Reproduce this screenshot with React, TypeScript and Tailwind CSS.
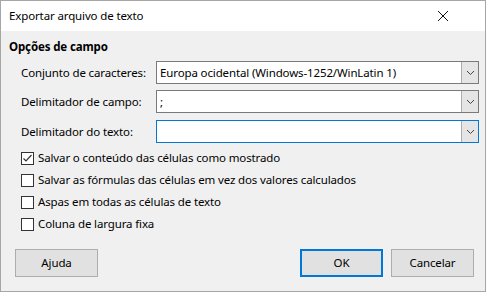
import React from 'react';

const font = { fontFamily: '"Noto Sans", "Liberation Sans", sans-serif' };

function Combo({ value, focused }: { value: string; focused?: boolean }) {
  return (
    <div
      className={`flex h-[23px] w-[323px] bg-white border ${
        focused ? 'border-[#0078d7]' : 'border-[#7a7a7a]'
      }`}
    >
      <div className="flex-1 pl-[3px] leading-[21px] text-black whitespace-nowrap overflow-hidden">
        {value}
      </div>
      <div className="w-[17px] h-[21px] bg-[#e5e5e5] border-l border-[#adadad] flex items-center justify-center">
        <svg width="9" height="6" viewBox="0 0 9 6">
          <polyline points="1,1 4.5,4.5 8,1" fill="none" stroke="#444" strokeWidth="1" />
        </svg>
      </div>
    </div>
  );
}

function Check({ label, checked }: { label: string; checked?: boolean }) {
  return (
    <div className="flex items-center h-[22px]">
      <div className="w-[13px] h-[13px] border border-[#333] bg-white flex items-center justify-center">
        {checked && (
          <svg width="11" height="11" viewBox="0 0 11 11">
            <polyline points="1.5,5.5 4,8 9.5,2" fill="none" stroke="#333" strokeWidth="1.2" />
          </svg>
        )}
      </div>
      <span className="ml-[4px] text-black whitespace-nowrap">{label}</span>
    </div>
  );
}

function Button({ label, primary }: { label: string; primary?: boolean }) {
  return (
    <div
      className={`w-[83px] h-[28px] bg-[#e1e1e1] flex items-center justify-center text-black ${
        primary ? 'border-2 border-[#0078d7]' : 'border border-[#adadad]'
      }`}
    >
      {label}
    </div>
  );
}

export default function App() {
  return (
    <div
      className="w-[490px] h-[293px] bg-white overflow-hidden text-[11.5px] tracking-[-0.13px]"
      style={font}
    >
      <div className="w-[486px] h-[292px] border border-[#a6a6a6] flex flex-col">
        {/* title bar */}
        <div className="h-[30px] bg-white flex items-center justify-between pl-[8px] pr-[36px] shrink-0">
          <span className="text-black">Exportar arquivo de texto</span>
          <svg width="12" height="12" viewBox="0 0 12 12">
            <path d="M1 1 L11 11 M11 1 L1 11" stroke="#111" strokeWidth="1" />
          </svg>
        </div>

        <div className="flex-1 bg-[#f0f0f0] flex flex-col pl-[8px] pr-[6px] pt-[8px]">
          <div className="font-bold text-black leading-[16px]">Opções de campo</div>

          <div className="pl-[12px] flex flex-col mt-[6px]">
            <div className="flex items-center">
              <span className="w-[135px] text-black">Conjunto de caracteres:</span>
              <Combo value="Europa ocidental (Windows-1252/WinLatin 1)" />
            </div>
            <div className="flex items-center mt-[6px]">
              <span className="w-[135px] text-black">Delimitador de campo:</span>
              <Combo value=";" />
            </div>
            <div className="flex items-center mt-[7px]">
              <span className="w-[135px] text-black">Delimitador do texto:</span>
              <Combo value="" focused />
            </div>

            <div className="flex flex-col mt-[4px]">
              <Check label="Salvar o conteúdo das células como mostrado" checked />
              <Check label="Salvar as fórmulas das células em vez dos valores calculados" />
              <Check label="Aspas em todas as células de texto" />
              <Check label="Coluna de largura fixa" />
            </div>
          </div>

          <div className="flex items-center mt-[14px] pl-[6px] pr-[5px]">
            <Button label="Ajuda" />
            <div className="flex-1" />
            <Button label="OK" primary />
            <div className="w-[8px]" />
            <Button label="Cancelar" />
          </div>
        </div>
      </div>
    </div>
  );
}
